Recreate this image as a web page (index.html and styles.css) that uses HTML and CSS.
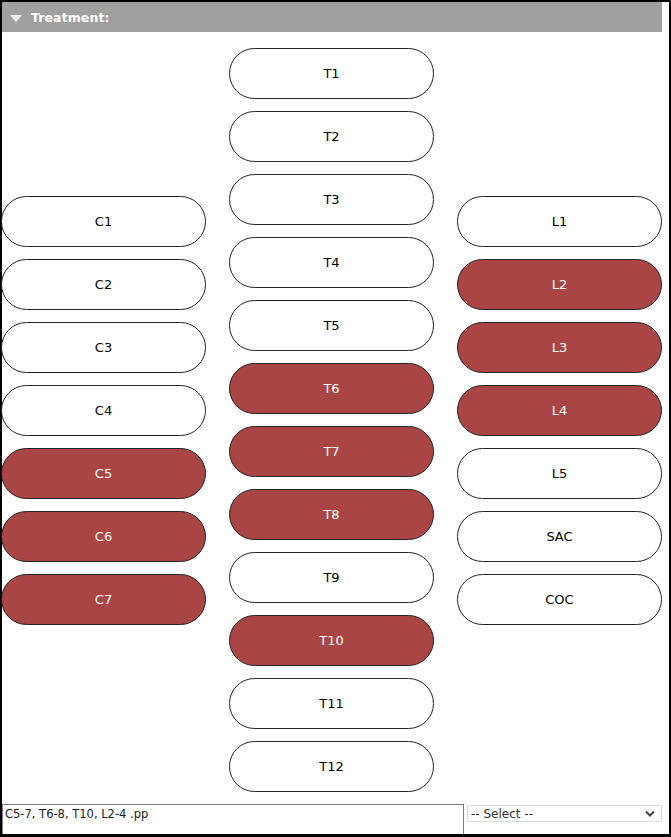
FILE: index.html
```html
<!DOCTYPE html>
<html lang="en">
<head>
  <meta charset="UTF-8">
  <title>Treatment</title>
  <link rel="stylesheet" href="styles.css">
</head>
<body>

<div class="frame">
  <div class="section-head">
    <span class="caret"></span>
    <span class="section-title">Treatment:</span>
  </div>

  <div class="spine">
    <div class="col col-side col-c">
      <button class="seg">C1</button>
      <button class="seg">C2</button>
      <button class="seg">C3</button>
      <button class="seg">C4</button>
      <button class="seg on">C5</button>
      <button class="seg on">C6</button>
      <button class="seg on">C7</button>
    </div>
    <div class="col">
      <button class="seg">T1</button>
      <button class="seg">T2</button>
      <button class="seg">T3</button>
      <button class="seg">T4</button>
      <button class="seg">T5</button>
      <button class="seg on">T6</button>
      <button class="seg on">T7</button>
      <button class="seg on">T8</button>
      <button class="seg">T9</button>
      <button class="seg on">T10</button>
      <button class="seg">T11</button>
      <button class="seg">T12</button>
    </div>
    <div class="col col-side">
      <button class="seg">L1</button>
      <button class="seg on">L2</button>
      <button class="seg on">L3</button>
      <button class="seg on">L4</button>
      <button class="seg">L5</button>
      <button class="seg">SAC</button>
      <button class="seg">COC</button>
    </div>
  </div>

  <div class="result-row">
    <textarea class="result">C5-7, T6-8, T10, L2-4 .pp</textarea>
    <div class="picker-wrap">
      <select class="picker">
        <option>-- Select --</option>
      </select>
      <svg class="chev" width="10" height="7" viewBox="0 0 10 7">
        <path d="M1 1.5 L5 5.5 L9 1.5" fill="none" stroke="#444" stroke-width="2"/>
      </svg>
    </div>
  </div>
</div>

</body>
</html>
```

FILE: styles.css
```css
html, body {
  margin: 0;
  padding: 0;
}

body {
  font-family: "DejaVu Sans", Verdana, sans-serif;
  background-color: #fff;
}

.frame {
  width: 667px;
  height: 832px;
  border: 2px solid #000;
  border-bottom-width: 3px;
  display: flex;
  flex-direction: column;
}

.section-head {
  height: 30px;
  margin-right: 7px;
  background-color: #a0a0a0;
  display: flex;
  align-items: center;
  color: #fff;
}

.caret {
  width: 0;
  height: 0;
  margin: 2px 9px 0 8px;
  border-left: 6px solid transparent;
  border-right: 6px solid transparent;
  border-top: 7px solid #ececec;
}

.section-title {
  font-size: 12.5px;
  font-weight: 600;
  letter-spacing: 0.1px;
}

.spine {
  display: grid;
  grid-template-columns: 205px 205px 205px;
  column-gap: 23px;
  margin: 16px 0 0 -1px;
}

.col {
  display: flex;
  flex-direction: column;
  gap: 12px;
}

.col-side {
  padding-top: 148px;
}

.seg {
  height: 51px;
  width: 205px;
  border: 1px solid #222;
  border-radius: 26px;
  background-color: #fff;
  color: #000;
  font-family: "DejaVu Sans", Verdana, sans-serif;
  font-size: 13px;
  padding: 0;
  cursor: pointer;
}

.seg.on {
  background-color: #a94545;
  color: #fff;
}

.result-row {
  display: flex;
  align-items: flex-start;
  gap: 3px;
  margin-top: 12px;
}

.result {
  width: 462px;
  height: 30px;
  margin: 0;
  padding: 2px 2px;
  box-sizing: border-box;
  border: 1px solid #7a7a8c;
  border-bottom: none;
  font-family: "DejaVu Sans", Tahoma, sans-serif;
  font-size: 11.5px;
  color: #222;
  resize: none;
}

.picker-wrap {
  position: relative;
  margin-top: 1px;
}

.picker {
  appearance: none;
  -webkit-appearance: none;
  display: block;
  width: 195px;
  height: 17px;
  margin: 0;
  padding: 0 3px;
  border: 1px solid #ddd;
  border-radius: 0;
  background-color: #fff;
  font-family: "DejaVu Sans", Tahoma, sans-serif;
  font-size: 12px;
  color: #333;
}

.chev {
  position: absolute;
  right: 7px;
  top: 5px;
  pointer-events: none;
}
```
